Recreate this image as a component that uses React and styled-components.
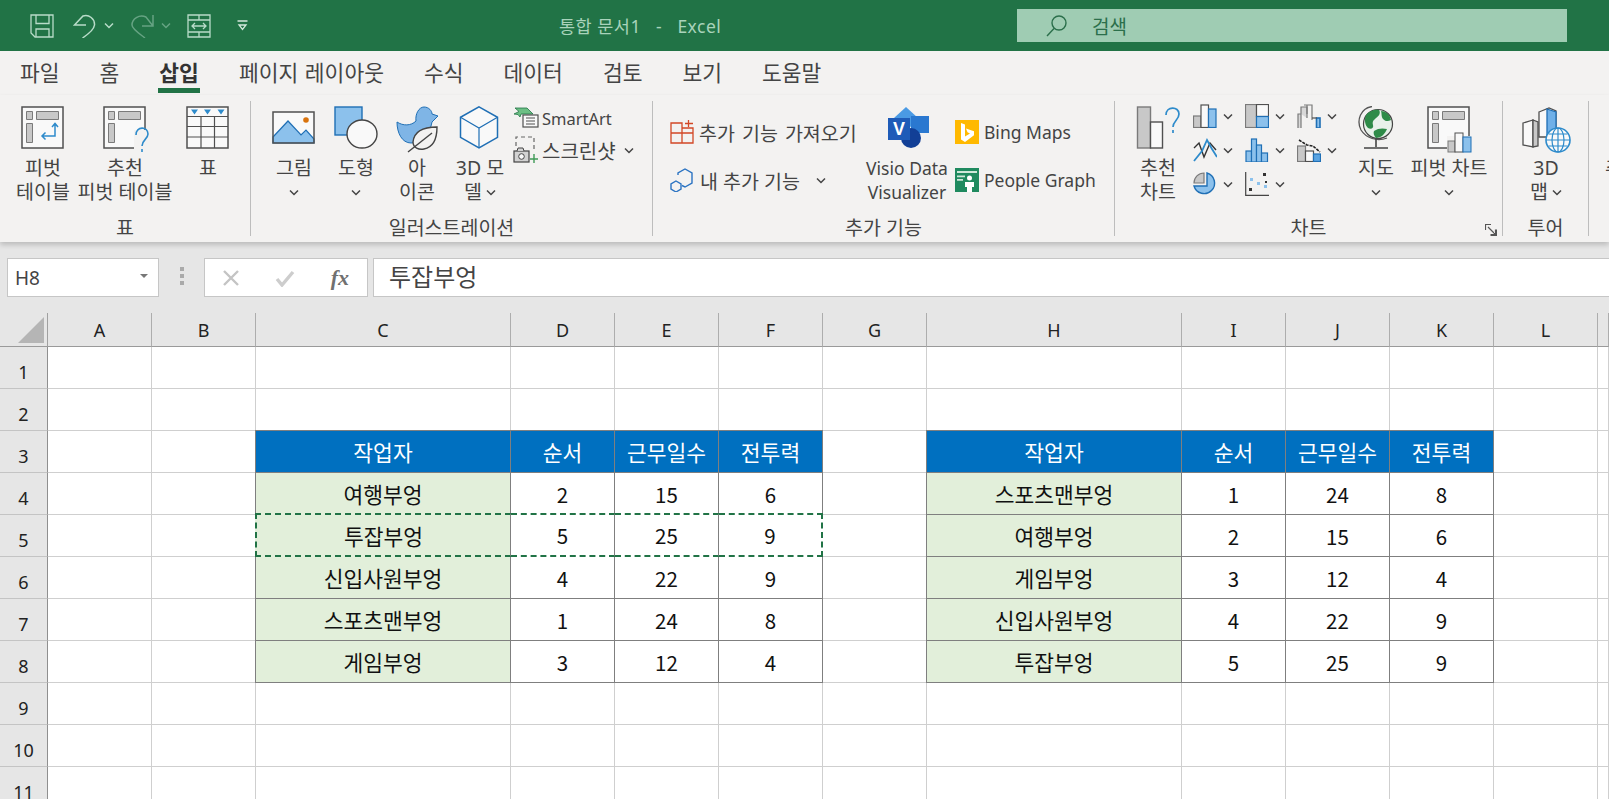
import styled, { createGlobalStyle } from 'styled-components';

const GlobalStyle = createGlobalStyle`
  html, body { margin: 0; padding: 0; background: #fff; }
  body { font-family: "Noto Sans CJK KR", "Noto Sans", sans-serif; }
`;

const BLUE = '#1f6fb5';
const SKY = '#8cc1ec';
const INK = '#505050';

const Chevron = ({ color = '#444' }) => (
  <ChevronSvg width="10" height="7" viewBox="0 0 10 7">
    <path d="M1 1.5l4 4 4-4" fill="none" stroke={color} strokeWidth="1.5" />
  </ChevronSvg>
);

const Save = () => (
  <svg width="24" height="24" viewBox="0 0 24 24" fill="none" stroke="#b9dcc9" strokeWidth="1.3">
    <path d="M1 1h22v22H5l-4-4z" />
    <path d="M6 1v8.500h13V1M6 23v-8h13v8" />
  </svg>
);
const Undo = () => (
  <svg width="24" height="24" viewBox="0 0 24 24" fill="none" stroke="#b9dcc9" strokeWidth="1.5">
    <path d="M13 11H1.500L10 2c6-2 12 3 11.500 9-.5 4-6 9-12 13" />
  </svg>
);
const Redo = () => (
  <svg width="24" height="24" viewBox="0 0 24 24" fill="none" stroke="#66a383" strokeWidth="1.5">
    <path d="M22 1v11H11M22 12l-7-9C8 0 1 5 1 11c0 4 8 9 13 13" />
  </svg>
);
const Resize = () => (
  <svg width="24" height="24" viewBox="0 0 24 24" fill="none" stroke="#b9dcc9" strokeWidth="1.3">
    <path d="M1 1h22v22H1zM1 6h22M1 18h22M12 1v5M12 18v5" />
    <path d="M5 12h14M8 9l-3 3 3 3M16 9l3 3-3 3" />
  </svg>
);
const QatMore = () => (
  <svg width="11" height="11" viewBox="0 0 11 11" fill="none" stroke="#d4e9dd" strokeWidth="1.3">
    <path d="M.5 1h10M2 5h7L5.500 9.500z" />
  </svg>
);
const Magnifier = () => (
  <svg width="21" height="22" viewBox="0 0 21 22" fill="none" stroke="#2b6f4b" strokeWidth="1.4">
    <circle cx="13" cy="8" r="7" />
    <path d="M8 13.5L1 21" />
  </svg>
);

const PivotFrame = () => (
  <>
    <rect x="3" y="1" width="41" height="41" fill="#f9f9f9" stroke={INK} strokeWidth="1.5" />
    <path d="M7.5 5.5h6v8h-6zM17.5 5.5h22v8h-22zM7.5 17.5h6v19h-6z" fill="#c8c8c8" stroke="#7a7a7a" />
  </>
);
const PivotIcon = () => (
  <svg width="48" height="48" viewBox="0 0 48 48">
    <PivotFrame />
    <path d="M36 18v12H23M33 21l3-3.5 3 3.5M26.5 26.5L23 30l3.5 3.5" fill="none" stroke="#2e8bcb" strokeWidth="1.5" />
  </svg>
);
const RecPivotIcon = () => (
  <svg width="48" height="48" viewBox="0 0 48 48">
    <PivotFrame />
    <path d="M33 24h14v24H33z" fill="#f3f2f1" />
    <path d="M35 29c0-9 12-9 12-1 0 5-6 6-6 12M41 43v3" fill="none" stroke="#2e8bcb" strokeWidth="1.6" />
  </svg>
);
const TableIcon = () => (
  <svg width="48" height="48" viewBox="0 0 48 48">
    <rect x="3" y="1" width="41" height="41" fill="#f9f9f9" stroke={INK} strokeWidth="1.5" />
    <path d="M3 10.5h41M3 20.5h41M3 31h41M17 10v32M30.500 10v32" stroke={INK} strokeWidth="1.2" fill="none" />
    <path d="M7 3.500h7l-3.500 5zM20 3.500h7l-3.500 5zM33.500 3.500h7l-3.500 5z" fill="#2e8bcb" />
  </svg>
);
const PictureIcon = () => (
  <svg width="48" height="48" viewBox="0 0 48 48">
    <rect x="3" y="6" width="41" height="31" fill="#f9f9f9" />
    <path d="M3 31l15-16 13 14 5-5 8 9v4H3z" fill={SKY} stroke={BLUE} strokeWidth="1.2" />
    <rect x="3" y="6" width="41" height="31" fill="none" stroke={INK} strokeWidth="1.5" />
    <circle cx="36" cy="14" r="2.800" fill="#d9730d" />
  </svg>
);
const ShapeIcon = () => (
  <svg width="48" height="48" viewBox="0 0 48 48">
    <rect x="3" y="1" width="27" height="28" fill={SKY} stroke={BLUE} strokeWidth="1.4" />
    <ellipse cx="30" cy="28" rx="15" ry="14" fill="#f9f9f9" stroke="#444" strokeWidth="1.4" />
  </svg>
);
const DuckIcon = () => (
  <svg width="48" height="48" viewBox="0 0 48 48">
    <path d="M4 16c6 4 14 4 19-1-1-7 3-14 8-14 5 0 8 4 8 7l6 2-6 6c-2 11-9 21-21 21C9 37 4 27 4 16z" fill="#7fb5e6" stroke={BLUE} strokeWidth="1" />
    <path d="M44 21c-14 0-23 5-24 15 0 6 6 8 11 7 10-2 13-12 13-22z" fill="#f3f2f1" stroke="#444" strokeWidth="1.4" />
    <path d="M15 46l24-19" fill="none" stroke="#444" strokeWidth="1.4" />
  </svg>
);
const CubeIcon = () => (
  <svg width="48" height="48" viewBox="0 0 48 48">
    <path d="M23 0.800l18.500 10.500v20L23 42 4.500 31.300v-20z" fill="#f9f9f9" stroke={BLUE} strokeWidth="1.5" />
    <path d="M4.500 11.300L23 22l18.500-10.700M23 22v20" fill="none" stroke={BLUE} strokeWidth="1.2" />
  </svg>
);
const SmartArtIcon = () => (
  <svg width="26" height="22" viewBox="0 0 26 22">
    <path d="M1 7l5-2.500L2 1h12l6 6H8l-1 3-2-2.500z" fill="#6cbf84" stroke="#217346" strokeWidth=".8" />
    <rect x="10" y="8" width="15" height="12" fill="#f9f9f9" stroke={INK} strokeWidth="1.2" />
    <path d="M13 11h9M13 14h9M13 17h9" stroke={INK} strokeWidth="1.2" />
  </svg>
);
const ScreenshotIcon = () => (
  <svg width="26" height="28" viewBox="0 0 26 28">
    <path d="M3 10V1h18v15" fill="none" stroke="#666" strokeWidth="1.2" strokeDasharray="4 3" />
    <rect x="1" y="15" width="15" height="11" fill="#d2d2d2" stroke="#444" strokeWidth="1.2" />
    <path d="M4 15l1-3h5l1 3" fill="#d2d2d2" stroke="#444" />
    <circle cx="8.500" cy="20.500" r="2.800" fill="#f9f9f9" stroke="#444" />
    <path d="M21 18v9M17 23h8" stroke="#3f9b57" strokeWidth="1.4" />
  </svg>
);
const AddinIcon = () => (
  <svg width="24" height="24" viewBox="0 0 24 24" fill="none" stroke="#d24726" strokeWidth="1.3">
    <path d="M1 3h11v20H1zM1 13h22v10H12M12 8h11v5" />
    <path d="M18.500 0v7M15 3.500h8" />
  </svg>
);
const MyAddinIcon = () => (
  <svg width="24" height="24" viewBox="0 0 24 24" fill="none" stroke="#2a73c2" strokeWidth="1.4">
    <path d="M8 7V5l7-4 7 4v10l-7 4-3-1.500" />
    <path d="M6 13l5 3v5l-5 3-5-3v-5z" />
  </svg>
);
const VisioIcon = () => (
  <svg width="44" height="48" viewBox="0 0 44 48">
    <path d="M21 1l12 11-12 14-12-14z" fill="#4a9ae4" />
    <rect x="26" y="10" width="18" height="17" fill="#2a78d0" />
    <circle cx="26" cy="32" r="10" fill="#123f96" />
    <rect x="3" y="12" width="22" height="22" fill="#1e5bb8" />
    <text x="14" y="29" fill="#fff" fontSize="18" fontWeight="700" textAnchor="middle" fontFamily="Liberation Sans, sans-serif">V</text>
  </svg>
);
const BingIcon = () => (
  <svg width="24" height="24" viewBox="0 0 24 24">
    <rect width="24" height="24" fill="#ffb900" />
    <path d="M6 3l4 1.500v12l5-3-2.500-1.200-1.500-3.800 8 2.800v4L10 22l-4-2.500z" fill="#fff" />
  </svg>
);
const PeopleIcon = () => (
  <svg width="24" height="24" viewBox="0 0 24 24">
    <rect width="24" height="24" fill="#1f8a5f" />
    <path d="M2 3h20v2H2zM2 7.500h8v1.800H2zM2 11h6v1.800H2z" fill="#cfe8da" />
    <circle cx="14.500" cy="10" r="2.500" fill="#fff" />
    <path d="M10 14h9v5h-2v5h-5v-5h-2z" fill="#fff" />
  </svg>
);
const RecChartIcon = () => (
  <svg width="48" height="48" viewBox="0 0 48 48">
    <rect x="3.500" y="1" width="13" height="41" fill="#c8c8c8" stroke="#7a7a7a" strokeWidth="1.4" />
    <rect x="16.500" y="16" width="12" height="26" fill="#f9f9f9" stroke={INK} strokeWidth="1.4" />
    <path d="M32 9c0-9 13-9 13-1 0 6-6 7-6 13M39 24v3" fill="none" stroke="#2e8bcb" strokeWidth="1.7" />
  </svg>
);
const GlobeIcon = () => (
  <svg width="48" height="48" viewBox="0 0 48 48">
    <circle cx="26" cy="18" r="14.500" fill="#e8f1ea" stroke="#444" strokeWidth="1.200" />
    <path d="M14 9c3-4 9-6 13-5 2 3 0 6-3 8-2 2-4 3-3 7 1 3-2 5-5 3-3-3-4-8-2-13zM29 5c4 0 9 3 10 9-4 2-6 1-8-1-2-3-1-5-2-8zM22 25c4-3 9-3 13-2-2 5-6 9-11 9-2-2-3-5-2-7z" fill="#2e8b48" />
    <path d="M20 0.500C9 2 4 14 9 24c5 8 16 12 26 8" fill="none" stroke="#555" strokeWidth="1.300" />
    <path d="M24 33v8M12 42h24" stroke="#444" strokeWidth="1.600" />
  </svg>
);
const PivotChartIcon = () => (
  <svg width="48" height="48" viewBox="0 0 48 48">
    <PivotFrame />
    <path d="M22 30h26v17H22z" fill="#f3f2f1" />
    <rect x="23" y="35" width="7" height="11" fill="#c8c8c8" stroke="#7a7a7a" />
    <rect x="30" y="27" width="8" height="19" fill="#f9f9f9" stroke={INK} />
    <rect x="38" y="31" width="8" height="15" fill={SKY} stroke={BLUE} />
  </svg>
);
const MapIcon = () => (
  <svg width="52" height="48" viewBox="0 0 52 48">
    <path d="M3 17l10-3v27l-10-2z" fill="#f9f9f9" stroke={INK} strokeWidth="1.3" />
    <path d="M13 14l5 2v24l-5 1z" fill="#c8c8c8" stroke={INK} strokeWidth="1.3" />
    <path d="M19 6l10-4 7 3v26H19z" fill="#f9f9f9" stroke={INK} strokeWidth="1.3" />
    <path d="M27 3l9 3v28h-9z" fill="#6fb0e8" stroke={BLUE} strokeWidth="1.3" />
    <circle cx="38" cy="34" r="12" fill="#f9f9f9" stroke="#2e8bcb" strokeWidth="1.6" />
    <path d="M26 34h24M38 22v24M28.500 28h19M28.500 40h19" stroke="#2e8bcb" strokeWidth="1.2" />
    <ellipse cx="38" cy="34" rx="6" ry="12" fill="none" stroke="#2e8bcb" strokeWidth="1.2" />
  </svg>
);

const MiniChart = ({ kind }) => {
  const gray = { fill: '#c8c8c8', stroke: '#7a7a7a' };
  const white = { fill: '#f9f9f9', stroke: INK };
  const blue = { fill: SKY, stroke: BLUE };
  return (
    <svg width="24" height="24" viewBox="0 0 24 24" strokeWidth="1.200">
      {kind === 'column' && (
        <>
          <rect x="0.500" y="12" width="7.500" height="11.500" {...gray} />
          <rect x="8" y="1" width="7.500" height="22.500" {...white} />
          <rect x="15.500" y="5" width="7.500" height="18.500" {...blue} />
        </>
      )}
      {kind === 'tree' && (
        <>
          <rect x="0.500" y="0.500" width="11" height="23" {...gray} />
          <rect x="11.500" y="0.500" width="12" height="12" {...white} />
          <rect x="11.500" y="12.500" width="12" height="11" {...blue} />
        </>
      )}
      {kind === 'water' && (
        <>
          <path d="M1 24V10h3v14M4 10V3h6v11" fill="#d8d8d8" stroke="#7a7a7a" />
          <path d="M7 1h3v9M10 1h5v15" fill="none" stroke="#7a7a7a" />
          <rect x="19.500" y="14" width="3.500" height="10" fill={SKY} stroke={BLUE} strokeWidth="1.600" />
          <path d="M15 14h5" stroke={INK} />
        </>
      )}
      {kind === 'line' && (
        <>
          <path d="M1 10l5-5 5 14 6-14 6 7" fill="none" stroke="#333" strokeWidth="1.400" />
          <path d="M1 23l8-10 5-11 5 9 5 8" fill="none" stroke="#2e8bcb" strokeWidth="1.800" />
        </>
      )}
      {kind === 'stat' && (
        <>
          <rect x="1" y="13" width="5.500" height="11" fill={SKY} stroke={BLUE} />
          <rect x="6.500" y="1" width="5" height="23" fill={SKY} stroke={BLUE} />
          <rect x="11.500" y="7" width="5" height="17" fill={SKY} stroke={BLUE} />
          <rect x="16.500" y="15" width="6" height="9" fill={SKY} stroke={BLUE} />
        </>
      )}
      {kind === 'combo' && (
        <>
          <rect x="0.500" y="8" width="8" height="15.500" {...gray} />
          <rect x="8.500" y="13" width="8" height="10.500" {...white} />
          <rect x="16.500" y="16" width="7" height="7.500" fill="#5aa4e2" stroke={BLUE} />
          <path d="M2 2l8 5 6 1 7 6" fill="none" stroke="#222" strokeWidth="1.600" strokeDasharray="3 1" />
        </>
      )}
      {kind === 'pie' && (
        <>
          <path d="M11 1a10 10 0 00-10 10h10z" {...gray} />
          <path d="M14 1a10.500 10.500 0 11-13 13h13z" fill={SKY} stroke={BLUE} strokeWidth="1.400" />
        </>
      )}
      {kind === 'scatter' && (
        <>
          <path d="M0.700 0v23.300H24" fill="none" stroke="#444" />
          <path d="M5 6h3v3H5zM12 10h3v3h-3zM19 13h3v3h-3z" fill="#8cc1ec" />
          <path d="M18 1h3v3h-3zM4 16h3v3H4zM20 9h2v2h-2z" fill="#333" />
        </>
      )}
    </svg>
  );
};

const LargeButton = ({ w, icon, lines, arrow, latin }) => (
  <LargeBtn $w={w}>
    <IconSlot>{icon}</IconSlot>
    {lines.map((line) => (
      <LabelLine key={line} $latin={latin}>
        {line}
      </LabelLine>
    ))}
    {arrow && (
      <LabelLine>
        <Chevron />
      </LabelLine>
    )}
  </LargeBtn>
);

const TABS = ['파일', '홈', '삽입', '페이지 레이아웃', '수식', '데이터', '검토', '보기', '도움말'];
const COLUMNS = ['A', 'B', 'C', 'D', 'E', 'F', 'G', 'H', 'I', 'J', 'K', 'L', ''];
const COLUMN_WIDTHS = COLUMNS.map((c) => (c === 'C' || c === 'H' ? '255px' : c ? '104px' : '1fr')).join(' ');
const HEAD = ['작업자', '순서', '근무일수', '전투력'];
const LEFT = [
  ['여행부엉', 2, 15, 6],
  ['투잡부엉', 5, 25, 9],
  ['신입사원부엉', 4, 22, 9],
  ['스포츠맨부엉', 1, 24, 8],
  ['게임부엉', 3, 12, 4],
];
const RIGHT = [
  ['스포츠맨부엉', 1, 24, 8],
  ['여행부엉', 2, 15, 6],
  ['게임부엉', 3, 12, 4],
  ['신입사원부엉', 4, 22, 9],
  ['투잡부엉', 5, 25, 9],
];
const CHARTS = ['column', 'tree', 'water', 'line', 'stat', 'combo', 'pie', 'scatter'];

const renderCell = (row, colIdx) => {
  const key = `${row}-${colIdx}`;
  const start = colIdx >= 2 && colIdx <= 5 ? 2 : colIdx >= 7 && colIdx <= 10 ? 7 : -1;
  if (start < 0 || row < 3 || row > 8) return <Cell key={key} />;
  const pos = colIdx - start;
  if (row === 3) {
    return (
      <HeadCell key={key} $first={pos === 0}>
        {HEAD[pos]}
      </HeadCell>
    );
  }
  const data = start === 2 ? LEFT : RIGHT;
  const ants = start === 2 && row === 5;
  return (
    <DataCell key={key} $name={pos === 0} $ants={ants} $end={pos === 3}>
      {data[row - 4][pos]}
    </DataCell>
  );
};

const App = () => (
  <Page>
    <GlobalStyle />
    <TitleBar>
      <Qat>
        <QatItem $ml={30}><Save /></QatItem>
        <QatItem $ml={19}><Undo /></QatItem>
        <QatItem $ml={7}><Chevron color="#b9dcc9" /></QatItem>
        <QatItem $ml={17}><Redo /></QatItem>
        <QatItem $ml={6}><Chevron color="#66a383" /></QatItem>
        <QatItem $ml={16}><Resize /></QatItem>
        <QatItem $ml={26}><QatMore /></QatItem>
      </Qat>
      <DocTitle>통합 문서1&nbsp;&nbsp;&nbsp;-&nbsp;&nbsp;&nbsp;Excel</DocTitle>
      <SearchBox>
        <Magnifier />
        <span>검색</span>
      </SearchBox>
    </TitleBar>

    <TabRow>
      {TABS.map((tab) => (
        <Tab key={tab} $active={tab === '삽입'}>
          {tab}
        </Tab>
      ))}
    </TabRow>

    <Ribbon>
      <Group $w={251}>
        <GroupBody>
          <LargeButton w={86} icon={<PivotIcon />} lines={['피벗', '테이블']} />
          <LargeButton w={78} icon={<RecPivotIcon />} lines={['추천', '피벗 테이블']} />
          <LargeButton w={88} icon={<TableIcon />} lines={['표']} />
        </GroupBody>
        <GroupLabel>표</GroupLabel>
      </Group>

      <Group $w={402}>
        <GroupBody $pad={12}>
          <LargeButton w={62} icon={<PictureIcon />} lines={['그림']} arrow />
          <LargeButton w={62} icon={<ShapeIcon />} lines={['도형']} arrow />
          <LargeButton w={60} icon={<DuckIcon />} lines={['아', '이콘']} />
          <LargeBtn $w={66}>
            <IconSlot><CubeIcon /></IconSlot>
            <LabelLine>3D 모</LabelLine>
            <LabelLine>델 <Chevron /></LabelLine>
          </LargeBtn>
          <Stack $top={3} $gap={4}>
            <SmallRow $h={28}><SmartArtIcon /><SmallText $ml={3} $size={16.5}>SmartArt</SmallText></SmallRow>
            <SmallRow $h={28}><ScreenshotIcon /><SmallText $ml={3} $size={20}>스크린샷</SmallText><RowChevron $ml={8}><Chevron /></RowChevron></SmallRow>
          </Stack>
        </GroupBody>
        <GroupLabel>일러스트레이션</GroupLabel>
      </Group>

      <Group $w={462}>
        <GroupBody $pad={17}>
          <Stack $top={19} $gap={24} $w={196}>
            <SmallRow $h={24}><AddinIcon /><SmallText $ml={5} $ws={2}>추가 기능 가져오기</SmallText></SmallRow>
            <SmallRow $h={24}><MyAddinIcon /><SmallText $ml={6}>내 추가 기능</SmallText><RowChevron $ml={16}><Chevron /></RowChevron></SmallRow>
          </Stack>
          <LargeButton w={82} icon={<VisioIcon />} lines={['Visio Data', 'Visualizer']} latin />
          <Stack $top={19} $gap={24} $ml={7}>
            <SmallRow $h={24}><BingIcon /><SmallText $ml={5} $size={17.5}>Bing Maps</SmallText></SmallRow>
            <SmallRow $h={24}><PeopleIcon /><SmallText $ml={5} $size={17.5}>People Graph</SmallText></SmallRow>
          </Stack>
        </GroupBody>
        <GroupLabel>추가 기능</GroupLabel>
      </Group>

      <Group $w={388}>
        <GroupBody $pad={8}>
          <LargeButton w={70} icon={<RecChartIcon />} lines={['추천', '차트']} />
          <ChartGrid>
            {CHARTS.map((kind) => (
              <ChartBtn key={kind}>
                <MiniChart kind={kind} />
                <Chevron />
              </ChartBtn>
            ))}
          </ChartGrid>
          <LargeButton w={54} icon={<GlobeIcon />} lines={['지도']} arrow />
          <LargeButton w={92} icon={<PivotChartIcon />} lines={['피벗 차트']} arrow />
        </GroupBody>
        <GroupLabel>차트</GroupLabel>
        <Launcher width="12" height="12" viewBox="0 0 12 12">
          <path d="M11.500 5.500v6h-6M0.500 6V0.500H6M3 3l7 7M10.500 5.500v5h-5" fill="none" stroke="#555" strokeWidth="1.200" />
        </Launcher>
      </Group>

      <Group $w={86}>
        <GroupBody $pad={0}>
          <LargeBtn $w={86}>
            <IconSlot><MapIcon /></IconSlot>
            <LabelLine>3D</LabelLine>
            <LabelLine>맵 <Chevron /></LabelLine>
          </LargeBtn>
        </GroupBody>
        <GroupLabel>투어</GroupLabel>
      </Group>

      <Group $w={20} $last>
        <GroupBody $pad={16}>
          <CutBtn>
            <IconSlot />
            <CutLabel>추</CutLabel>
          </CutBtn>
        </GroupBody>
      </Group>
    </Ribbon>

    <FormulaBar>
      <NameBox>
        <span>H8</span>
        <NameCaret />
      </NameBox>
      <Grip>
        <i /><i /><i />
      </Grip>
      <FxBox>
        <svg width="18" height="18" viewBox="0 0 18 18" stroke="#c4c4c4" strokeWidth="2.400">
          <path d="M2 2l14 14M16 2L2 16" />
        </svg>
        <svg width="20" height="18" viewBox="0 0 20 18" fill="none" stroke="#cdcdcd" strokeWidth="3.400">
          <path d="M2 10l5 6L18 3" />
        </svg>
        <FxText>fx</FxText>
      </FxBox>
      <FormulaInput>투잡부엉</FormulaInput>
    </FormulaBar>

    <Sheet>
      <Corner>
        <CornerMark />
      </Corner>
      {COLUMNS.map((col, i) => (
        <ColHead key={i}>{col}</ColHead>
      ))}
      {Array.from({ length: 11 }, (_, r) => [
        <RowHead key={`h${r}`}>{r + 1}</RowHead>,
        ...COLUMNS.map((_c, c) => renderCell(r + 1, c)),
      ])}
    </Sheet>
  </Page>
);

const Page = styled.div`
  width: 1609px;
  height: 799px;
  overflow: hidden;
  background: #fff;
  color: #444;
  font-family: "Noto Sans", "Noto Sans CJK KR", sans-serif;
`;

const ChevronSvg = styled.svg`
  display: inline-block;
  flex: none;
`;

const TitleBar = styled.div`
  height: 51px;
  background: #217346;
  display: flex;
  align-items: center;
`;

const Qat = styled.div`
  width: 559px;
  display: flex;
  align-items: center;
`;

const QatItem = styled.div`
  display: flex;
  margin-left: ${(p) => p.$ml}px;
`;

const DocTitle = styled.div`
  width: 458px;
  color: #a9d3bb;
  font-size: 17.5px;
  letter-spacing: 0.5px;
  white-space: nowrap;
`;

const SearchBox = styled.div`
  width: 550px;
  height: 33px;
  background: #9fccb3;
  display: flex;
  align-items: center;
  gap: 25px;
  padding-left: 29px;
  box-sizing: border-box;
  color: #2b6f4b;
  font-size: 19px;
`;

const TabRow = styled.div`
  height: 44px;
  background: #f3f2f1;
  display: flex;
  gap: 40px;
  padding-left: 20px;
`;

const Tab = styled.div`
  position: relative;
  font-size: 21.5px;
  line-height: 44px;
  word-spacing: 1px;
  color: ${(p) => (p.$active ? '#333' : '#444')};
  font-weight: ${(p) => (p.$active ? 700 : 400)};
  white-space: nowrap;

  &::after {
    content: '';
    display: ${(p) => (p.$active ? 'block' : 'none')};
    position: absolute;
    left: -1px;
    right: -1px;
    top: 37px;
    height: 5px;
    background: #217346;
  }
`;

const Ribbon = styled.div`
  height: 147px;
  box-sizing: border-box;
  padding-top: 6px;
  background: #f3f2f1;
  display: flex;
  box-shadow: 0 3px 5px rgba(0, 0, 0, 0.18);
  position: relative;
`;

const Group = styled.div`
  position: relative;
  flex: none;
  width: ${(p) => p.$w}px;
  height: 135px;
  box-sizing: border-box;
  border-right: ${(p) => (p.$last ? 'none' : '1px solid #bdbdbd')};
  display: flex;
  flex-direction: column;
`;

const GroupBody = styled.div`
  height: 119px;
  display: flex;
  padding-left: ${(p) => p.$pad || 0}px;
`;

const GroupLabel = styled.div`
  height: 16px;
  line-height: 16px;
  text-align: center;
  font-size: 19.5px;
  color: #444;
  white-space: nowrap;
`;

const LargeBtn = styled.div`
  flex: none;
  width: ${(p) => p.$w}px;
  display: flex;
  flex-direction: column;
  align-items: center;
`;

const CutBtn = styled.div`
  flex: none;
  width: 6px;
  overflow: hidden;
  display: flex;
  flex-direction: column;
`;

const IconSlot = styled.div`
  height: 55px;
  box-sizing: border-box;
  padding-top: 5px;
  display: flex;
  justify-content: center;
`;

const LabelLine = styled.div`
  height: 24px;
  line-height: 24px;
  font-size: ${(p) => (p.$latin ? 17.5 : 19.5)}px;
  white-space: nowrap;
  display: flex;
  align-items: center;
  justify-content: center;
  gap: 4px;
`;

const CutLabel = styled(LabelLine)`
  justify-content: flex-start;
`;

const Stack = styled.div`
  flex: none;
  display: flex;
  flex-direction: column;
  width: ${(p) => (p.$w ? `${p.$w}px` : 'auto')};
  margin-left: ${(p) => p.$ml || 0}px;
  padding-top: ${(p) => p.$top}px;
  gap: ${(p) => p.$gap}px;
`;

const SmallRow = styled.div`
  height: ${(p) => p.$h}px;
  display: flex;
  align-items: center;
  white-space: nowrap;

  svg {
    flex: none;
  }
`;

const SmallText = styled.span`
  margin-left: ${(p) => p.$ml}px;
  font-size: ${(p) => p.$size || 19.5}px;
  word-spacing: ${(p) => p.$ws || 0}px;
`;

const RowChevron = styled.span`
  display: flex;
  margin-left: ${(p) => p.$ml}px;
`;

const ChartGrid = styled.div`
  flex: none;
  width: 156px;
  height: 102px;
  display: grid;
  grid-template-columns: repeat(3, 52px);
  grid-template-rows: repeat(3, 34px);
`;

const ChartBtn = styled.div`
  display: flex;
  align-items: center;
  gap: 6px;
  height: 24px;
  margin-top: 3px;
`;

const Launcher = styled.svg`
  position: absolute;
  right: 5px;
  bottom: 0;
`;

const FormulaBar = styled.div`
  height: 71px;
  box-sizing: border-box;
  background: #e6e6e6;
  display: flex;
  padding: 16px 0 16px 7px;
  color: #444;
`;

const NameBox = styled.div`
  width: 152px;
  height: 39px;
  box-sizing: border-box;
  background: #fff;
  border: 1px solid #c6c6c6;
  display: flex;
  align-items: center;
  justify-content: space-between;
  padding: 0 10px 0 7px;
  font-size: 19px;

  span {
    color: #444;
  }
`;

const NameCaret = styled.div`
  width: 0;
  height: 0;
  border-left: 4px solid transparent;
  border-right: 4px solid transparent;
  border-top: 4px solid #777;
  margin-top: -4px;
`;

const Grip = styled.div`
  width: 45px;
  display: flex;
  flex-direction: column;
  align-items: center;
  justify-content: center;
  gap: 3px;
  padding-bottom: 3px;

  i {
    width: 4px;
    height: 4px;
    background: #aaa;
  }
`;

const FxBox = styled.div`
  width: 164px;
  height: 39px;
  box-sizing: border-box;
  background: #fff;
  border: 1px solid #c6c6c6;
  display: flex;
  align-items: center;
  justify-content: space-between;
  padding: 0 18px 0 17px;
`;

const FxText = styled.span`
  font-family: "Liberation Serif", serif;
  font-style: italic;
  font-weight: 700;
  font-size: 22px;
  color: #707070;
`;

const FormulaInput = styled.div`
  flex: 1;
  height: 39px;
  margin-left: 5px;
  box-sizing: border-box;
  background: #fff;
  border: 1px solid #c6c6c6;
  border-right: none;
  padding-left: 15px;
  font-size: 24px;
  line-height: 35px;
`;

const Sheet = styled.div`
  display: grid;
  grid-template-columns: 48px ${COLUMN_WIDTHS};
  grid-template-rows: 34px;
  grid-auto-rows: 42px;
  font-family: "Noto Sans CJK KR", sans-serif;
  color: #111;
`;

const Corner = styled.div`
  background: #e6e6e6;
  border-right: 1px solid #a0a0a0;
  border-bottom: 1px solid #9a9a9a;
  box-sizing: border-box;
  display: flex;
  justify-content: flex-end;
  align-items: flex-end;
  padding: 0 3px 3px 0;
`;

const CornerMark = styled.div`
  width: 0;
  height: 0;
  border-left: 26px solid transparent;
  border-bottom: 26px solid #b5b5b5;
`;

const ColHead = styled.div`
  background: #e6e6e6;
  box-sizing: border-box;
  border-right: 1px solid #adadad;
  border-bottom: 1px solid #9a9a9a;
  display: flex;
  align-items: center;
  justify-content: center;
  font-family: "Noto Sans", sans-serif;
  font-size: 18px;
  color: #222;
`;

const RowHead = styled.div`
  background: #e6e6e6;
  box-sizing: border-box;
  border-right: 1px solid #8f8f8f;
  border-bottom: 1px solid #c4c4c4;
  display: flex;
  align-items: center;
  justify-content: center;
  padding-top: 8px;
  font-family: "Noto Sans", sans-serif;
  font-size: 18px;
  color: #222;
`;

const Cell = styled.div`
  box-sizing: border-box;
  border-right: 1px solid #cfcfcf;
  border-bottom: 1px solid #cfcfcf;
`;

const HeadCell = styled.div`
  box-sizing: border-box;
  background: #0070c0;
  color: #fff;
  margin-top: -1px;
  margin-left: ${(p) => (p.$first ? '-1px' : 0)};
  border-right: 1px solid #7f7f7f;
  border-bottom: 1px solid #7f7f7f;
  border-top: 1px solid #7f7f7f;
  border-left: ${(p) => (p.$first ? '1px solid #7f7f7f' : 'none')};
  display: flex;
  align-items: center;
  justify-content: center;
  font-size: 21.5px;
`;

const DataCell = styled.div`
  box-sizing: border-box;
  background: ${(p) => (p.$name ? '#e2efda' : '#fff')};
  color: #111;
  margin-left: ${(p) => (p.$name ? '-1px' : 0)};
  border-right: 1px solid #7f7f7f;
  border-bottom: 1px solid #7f7f7f;
  border-left: ${(p) => (p.$name ? '1px solid #7f7f7f' : 'none')};
  display: flex;
  align-items: center;
  justify-content: center;
  font-size: ${(p) => (p.$name ? 21.5 : 20.5)}px;
  ${(p) =>
    p.$ants &&
    `
    border-top: 2px dashed #217346;
    border-bottom: 2px dashed #217346;
    margin-top: -2px;
    height: 44px;
    ${p.$name ? 'border-left: 2px dashed #217346;' : ''}
    ${p.$end ? 'border-right: 2px dashed #217346;' : ''}
  `}
`;

export default App;
